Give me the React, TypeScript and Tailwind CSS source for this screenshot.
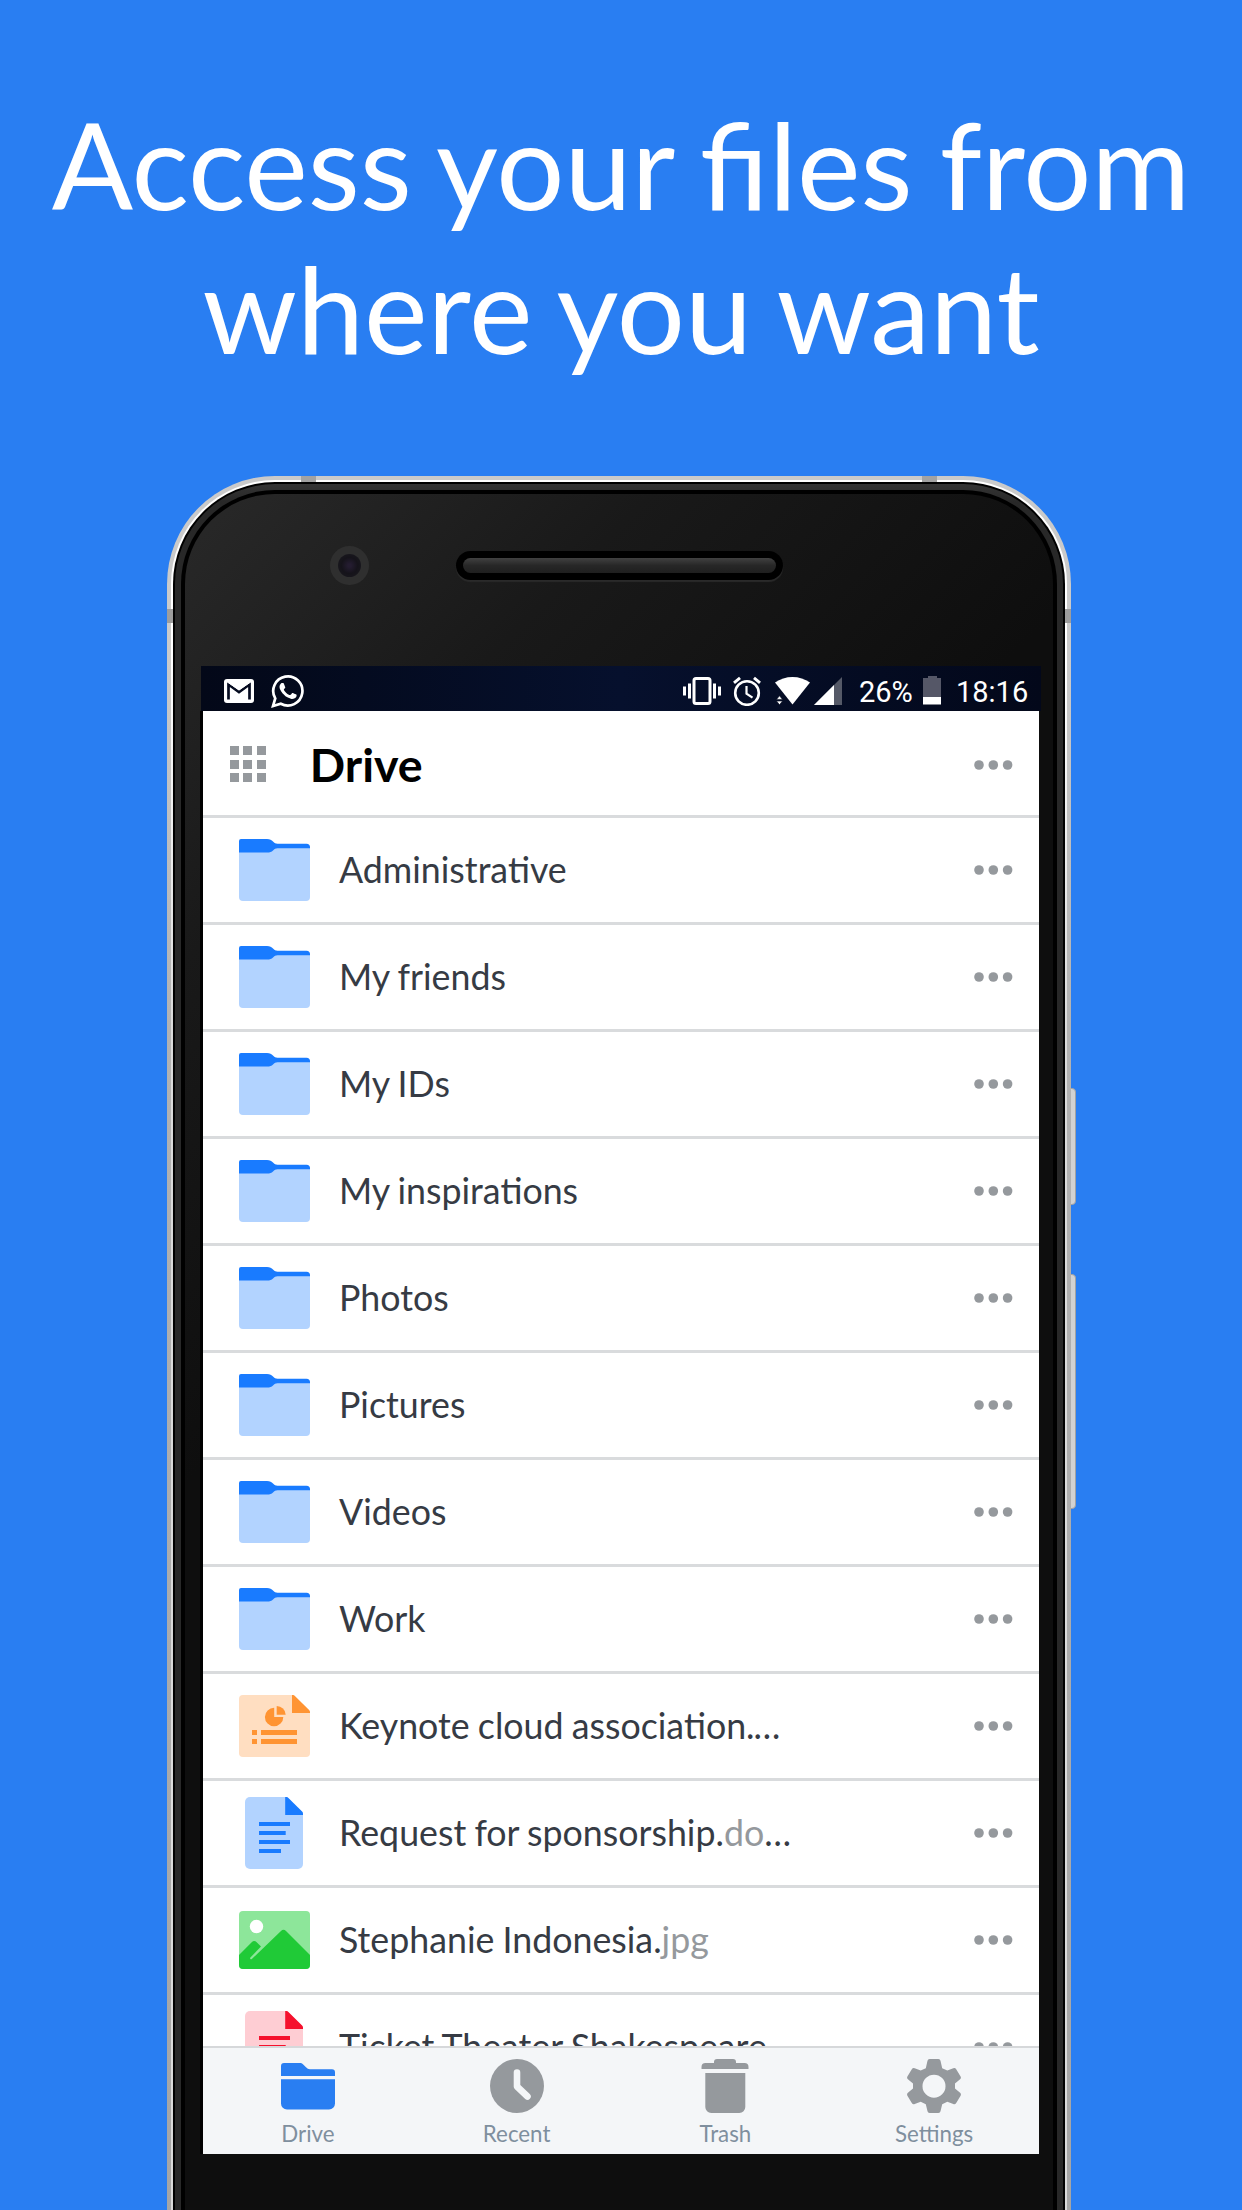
import type { ReactNode } from "react";

type Kind = "folder" | "slides" | "text" | "image" | "pdf";

interface Entry {
  kind: Kind;
  name: string;
  ext?: string;
  cut?: boolean;
}

const entries: Entry[] = [
  { kind: "folder", name: "Administrative" },
  { kind: "folder", name: "My friends" },
  { kind: "folder", name: "My IDs" },
  { kind: "folder", name: "My inspirations" },
  { kind: "folder", name: "Photos" },
  { kind: "folder", name: "Pictures" },
  { kind: "folder", name: "Videos" },
  { kind: "folder", name: "Work" },
  { kind: "slides", name: "Keynote cloud association.", cut: true },
  { kind: "text", name: "Request for sponsorship.", ext: "do", cut: true },
  { kind: "image", name: "Stephanie Indonesia.", ext: "jpg" },
  { kind: "pdf", name: "Ticket Theater Shakespeare", cut: true },
];

function FolderIcon() {
  return (
    <svg width="71" height="62" viewBox="0 0 71 62">
      <path d="M0 7H71V58a4 4 0 0 1-4 4H4a4 4 0 0 1-4-4Z" fill="#b2d3ff" />
      <path d="M0 2a2 2 0 0 1 2-2H28c3 0 4.500 1 6 2.500 1.500 1.500 2.500 2.200 4.500 2.200H67.500a3.500 3.500 0 0 1 3.500 3.500V9.200H38.500c-2 0-3 .7-4.500 2.200C32.500 12.800 31 13.500 28 13.500H0Z" fill="#197bff" />
    </svg>
  );
}

function SlidesIcon() {
  return (
    <svg width="71" height="62" viewBox="0 0 71 62">
      <path d="M4 0H54L71 17V58a4 4 0 0 1-4 4H4a4 4 0 0 1-4-4V4a4 4 0 0 1 4-4Z" fill="#ffdec1" />
      <path d="M53 0h1c.8 0 1.300.3 1.900.9l14.200 14.200c.6.600.9 1.100.9 1.900v1H53Z" fill="#ff9433" />
      <path d="M35.200 12.800V22H44.300a9.200 9.200 0 1 1-9.100-9.200Z" fill="#ff9433" />
      <path d="M37.700 11a9 9 0 0 1 9 8.700H37.700Z" fill="#ff9433" />
      <path d="M13 35h5v5h-5ZM22 35h36v5H22ZM13 44h5v5h-5ZM22 44h36v5H22Z" fill="#ff9433" />
    </svg>
  );
}

function DocIcon({ base, ink }: { base: string; ink: string }) {
  return (
    <svg className="mr-px" width="58" height="72" viewBox="0 0 58 72">
      <path d="M5 0H42L58 16V67a5 5 0 0 1-5 5H5a5 5 0 0 1-5-5V5a5 5 0 0 1 5-5Z" fill={base} />
      <path d="M40.200 0h1.300c.8 0 1.300.3 1.900.9L57.100 14.600c.6.600.9 1.100.9 1.900V18H40.200Z" fill={ink} />
      <path d="M14 25h31v4H14ZM14 34h26.700v4H14ZM14 43h31v4H14ZM14 52h22v4H14Z" fill={ink} />
    </svg>
  );
}

function ImageIcon() {
  return (
    <svg width="71" height="58" viewBox="0 0 71 58">
      <rect width="71" height="58" rx="4" fill="#8de69a" />
      <circle cx="17.500" cy="15.500" r="6.700" fill="#fff" />
      <path d="M0 44 12.700 31.200c1.700-1.700 3.300-1.700 5 0l4.300 4.300L11.400 46.600c-.9.900.4 2.400 1.400 1.400L42 20c1.600-1.600 3.400-1.600 5 0L71 44V54a4 4 0 0 1-4 4H4a4 4 0 0 1-4-4Z" fill="#20ca37" />
    </svg>
  );
}

function EntryIcon({ kind }: { kind: Kind }) {
  switch (kind) {
    case "folder":
      return <FolderIcon />;
    case "slides":
      return <SlidesIcon />;
    case "text":
      return <DocIcon base="#b2d3ff" ink="#197bff" />;
    case "image":
      return <ImageIcon />;
    default:
      return <DocIcon base="#fecdd3" ink="#f5112d" />;
  }
}

function More() {
  return (
    <svg className="mr-[26px]" width="39" height="10" viewBox="0 0 39 10" fill="#95999d">
      <circle cx="5" cy="5" r="4.800" />
      <circle cx="19.300" cy="5" r="4.800" />
      <circle cx="33.600" cy="5" r="4.800" />
    </svg>
  );
}

function Row({ entry }: { entry: Entry }) {
  return (
    <li className="flex h-[107px] shrink-0 items-center border-b-[3px] border-[#d9dbdd]">
      <div className="ml-[36px] flex w-[71px] justify-center">
        <EntryIcon kind={entry.kind} />
      </div>
      <div className="ml-[29px] flex-1 pb-[2px] text-[35.75px] leading-[43px] [word-spacing:-1px] whitespace-nowrap text-[#363b44]">
        {entry.name}
        {entry.ext && <span className="text-[#95999d]">{entry.ext}</span>}
        {entry.cut && <span className={entry.ext ? "" : "-ml-[1px]"}>…</span>}
      </div>
      <More />
    </li>
  );
}

function StatusBar() {
  return (
    <div className="ml-[16px] flex h-[45px] w-[840px] items-start bg-linear-to-r from-[#030818] via-[#06102d] to-[#03081a] font-[Roboto,sans-serif] text-white">
      <svg className="mt-[13px] ml-[23px]" width="30" height="24" viewBox="0 0 30 24">
        <rect width="30" height="24" rx="3" fill="#fff" />
        <path d="M4.500 20.500V5.500L15 13 25.500 5.500V20.500" fill="none" stroke="#050b20" strokeWidth="2.700" />
        <path d="M3 2.800 15 11 27 2.800" fill="none" stroke="#fff" strokeWidth="1" />
      </svg>
      <svg className="mt-[8px] ml-[17px]" width="34" height="34" viewBox="0 0 24 24">
        <path d="M17.472 14.382c-.297-.149-1.758-.867-2.030-.967-.273-.099-.471-.148-.670.150-.197.297-.767.966-.940 1.164-.173.199-.347.223-.644.075-.297-.150-1.255-.463-2.390-1.475-.883-.788-1.480-1.761-1.653-2.059-.173-.297-.018-.458.130-.606.134-.133.298-.347.446-.520.149-.174.198-.298.298-.497.099-.198.050-.371-.025-.520-.075-.149-.669-1.612-.916-2.207-.242-.579-.487-.500-.669-.510-.173-.008-.371-.010-.570-.010-.198 0-.520.074-.792.372-.272.297-1.040 1.016-1.040 2.479 0 1.462 1.065 2.875 1.213 3.074.149.198 2.096 3.200 5.077 4.487.709.306 1.262.489 1.694.625.712.227 1.360.195 1.871.118.571-.085 1.758-.719 2.006-1.413.248-.694.248-1.289.173-1.413-.074-.124-.272-.198-.570-.347" fill="#fff" />
        <path d="M1.400 22.600 3 17.200A10.300 10.300 0 1 1 6.900 21Z" fill="none" stroke="#fff" strokeWidth="1.900" strokeLinejoin="miter" />
      </svg>
      <svg className="mt-[11px] ml-[378px]" width="38" height="28" viewBox="0 0 38 28">
        <rect x="11" y="1.500" width="16" height="25" rx="2" fill="none" stroke="#fff" strokeWidth="3" />
        <path d="M0 9.500h3v9H0ZM5 6.500h3v15H5ZM30 6.500h3v15h-3ZM35 9.500h3v9h-3Z" fill="#fff" />
      </svg>
      <svg className="mt-[10px] ml-[11px]" width="30" height="30" viewBox="0 0 30 30">
        <g fill="none" stroke="#fff">
          <circle cx="15" cy="17" r="11.800" strokeWidth="2.600" />
          <path d="M14.500 10v7.700l6 4" strokeWidth="2.200" />
          <path d="M2 6.800 8 1.900M28 6.800 22 1.900" strokeWidth="3" />
        </g>
      </svg>
      <svg className="mt-[10px] ml-[13px]" width="68" height="30" viewBox="0 0 68 30">
        <path d="M0 6.500C10 -1 25 -1 35 6.500L17.500 28.500Z" fill="#fff" />
        <path d="M4.500 19.800 7.500 23.400H1.500ZM4.500 28.800 7.500 25H1.500Z" fill="#fff" stroke="#050b20" strokeWidth=".6" />
        <path d="M67 1V29H39Z" fill="#555967" />
        <path d="M59 9V29H39Z" fill="#fff" />
      </svg>
      <span className="mt-[9px] ml-[16px] w-[64px] text-[29px] leading-[34px]">26%</span>
      <svg className="mt-[9px]" width="18" height="30" viewBox="0 0 18 30">
        <path d="M5 1h9v2h4v19H0V3h5Z" fill="#555767" />
        <path d="M0 22h18v7.500H0Z" fill="#fff" />
      </svg>
      <span className="mt-[9px] ml-[15px] text-[29px] leading-[34px]">18:16</span>
    </div>
  );
}

function Tab({ label, children }: { label: string; children: ReactNode }) {
  return (
    <div className="flex flex-1 flex-col items-center">
      <svg className="mt-[11px]" width="54" height="54" viewBox="0 0 54 54">
        {children}
      </svg>
      <span className="mt-[7px] text-[22.3px] leading-[27px] text-[#7f8f9e]">{label}</span>
    </div>
  );
}

function TabBar() {
  return (
    <nav className="flex h-[108px] shrink-0 border-t-2 border-[#d6d8da] bg-[#f4f6f8] pr-[0.5px] pl-[0.5px]">
      <Tab label="Drive">
        <path d="M0 7a3 3 0 0 1 3-3H18.500c1.700 0 2.600.4 3.700 1.500L25 8.300c1.300 1.300 2.200 1.900 4 1.900H51a3 3 0 0 1 3 3V17H0ZM0 20.300H54V44.500a6 6 0 0 1-6 6H6a6 6 0 0 1-6-6Z" fill="#297ef2" />
      </Tab>
      <Tab label="Recent">
        <circle cx="27" cy="27" r="27" fill="#95999d" />
        <path d="M27 13.500V27.500L37.500 37.500" fill="none" stroke="#f4f6f8" strokeWidth="6.600" strokeLinecap="round" strokeLinejoin="round" />
      </Tab>
      <Tab label="Trash">
        <path d="M3.500 10V8a4 4 0 0 1 4-4H16v-1a3 3 0 0 1 3-3H35a3 3 0 0 1 3 3v1h8.500a4 4 0 0 1 4 4v2ZM7.300 14H47.300V48a6 6 0 0 1-6 6H13.300a6 6 0 0 1-6-6Z" fill="#95999d" />
      </Tab>
      <Tab label="Settings">
        <path
          fillRule="evenodd"
          d="M22.600 0H31.400a2.200 2.200 0 0 1 2.100 1.800L35.200 9.200 40.300 11.500 46.300 9.200a2.400 2.400 0 0 1 2.900 1L53.600 17.400a2.400 2.400 0 0 1-.5 2.900L48 24.600V29.600L53.100 33.800a2.400 2.400 0 0 1 .5 2.900L49.200 44a2.400 2.400 0 0 1-2.900 1L40.300 42.700 35.200 45.200 33.500 52.200A2.200 2.200 0 0 1 31.400 54H22.600A2.200 2.200 0 0 1 20.500 52.200L18.800 45.200 13.700 42.700 7.700 45A2.400 2.400 0 0 1 4.800 44L.4 36.700A2.400 2.400 0 0 1 .9 33.800L6 29.600V24.600L.9 20.300A2.400 2.400 0 0 1 .4 17.400L4.800 10.200A2.400 2.400 0 0 1 7.700 9.200L13.700 11.500 18.800 9.200 20.500 1.800A2.200 2.200 0 0 1 22.600 0ZM27 15.700a11.500 11.500 0 1 0 0 23 11.500 11.500 0 0 0 0-23Z"
          fill="#95999d"
        />
      </Tab>
    </nav>
  );
}

function Screen() {
  return (
    <div className="ml-[15px] h-[1443px] w-[839px] border-l-[3px] border-black">
      <div className="flex h-full flex-col bg-white">
        <header className="flex h-[107px] shrink-0 items-center border-b-[3px] border-[#d9dbdd] pt-[4px]">
          <div className="mb-[2px] ml-[27px] grid grid-cols-3 gap-[4.4px]">
            {Array.from({ length: 9 }, (_, i) => (
              <span key={i} className="size-[9px] bg-[#95999d]" />
            ))}
          </div>
          <h2 className="ml-[44px] flex-1 pb-[3px] text-[46.6px] leading-[56px] font-bold text-black">Drive</h2>
          <More />
        </header>
        <ul className="flex min-h-0 flex-1 flex-col overflow-hidden">
          {entries.map((entry) => (
            <Row key={entry.name} entry={entry} />
          ))}
        </ul>
        <TabBar />
      </div>
    </div>
  );
}

function PhoneTop() {
  return (
    <div className="flex h-[172px] items-start">
      <div className="mt-[52px] ml-[145px] flex size-[39px] items-center justify-center rounded-full bg-[#2f2f2f]">
        <div className="size-[23px] rounded-full bg-radial from-[#241c30] from-10% via-[#15131a] via-50% to-[#1c1b20]" />
      </div>
      <div className="mt-[57px] ml-[87px] h-[29px] w-[327px] rounded-full bg-black p-[7px] shadow-[0_2px_1px_#2a2a2a]">
        <div className="h-[15px] rounded-full bg-linear-to-b from-[#414141] via-[#272727] to-[#1f1f1f]" />
      </div>
    </div>
  );
}

function Phone() {
  return (
    <div className="relative ml-[167px] w-[904px] shrink-0">
      <div className="absolute top-[612px] left-[900px] h-[117px] w-[9px] rounded-r-[4px] border border-[#a2a2a2] bg-[#d2d2d2]" />
      <div className="absolute top-[798px] left-[900px] h-[235px] w-[9px] rounded-r-[4px] border border-[#a2a2a2] bg-[#d2d2d2]" />
      <div className="relative overflow-hidden rounded-t-[108px] bg-linear-to-b from-[#cacaca] from-10% via-[#b2b2b2] via-30% to-[#a4a4a4] p-[4px]">
        <div className="rounded-t-[104px] bg-linear-to-b from-white from-10% to-[#dadada] to-30% p-[2px]">
          <div className="rounded-t-[102px] bg-black p-[2px]">
            <div className="rounded-t-[100px] bg-linear-to-b from-[#343434] to-[#282828] to-1% p-[6px]">
              <div className="rounded-t-[94px] bg-black p-[4px]">
                <div className="h-[1800px] rounded-t-[90px] bg-[linear-gradient(135deg,#292929_0px,#191919_330px,#0e0e0e_700px)]">
                  <PhoneTop />
                  <StatusBar />
                  <Screen />
                </div>
              </div>
            </div>
          </div>
        </div>
        <div className="absolute top-0 left-[134px] h-[6px] w-[15px] bg-[#a2a2a2]" />
        <div className="absolute top-0 left-[755px] h-[6px] w-[15px] bg-[#a2a2a2]" />
        <div className="absolute top-[133px] left-0 h-[14px] w-[6px] bg-[#9d9d9d]" />
        <div className="absolute top-[133px] right-0 h-[14px] w-[6px] bg-[#9d9d9d]" />
      </div>
    </div>
  );
}

export default function App() {
  return (
    <main className="flex h-[2210px] w-[1242px] flex-col overflow-hidden bg-[#297ef2] font-[Lato,sans-serif]">
      <h1 className="h-[476px] shrink-0 pt-[92px] text-center text-[120.3px] leading-[144px] [word-spacing:-3.8px] whitespace-nowrap text-white">
        Access your files from
        <br />
        where you want
      </h1>
      <Phone />
    </main>
  );
}
